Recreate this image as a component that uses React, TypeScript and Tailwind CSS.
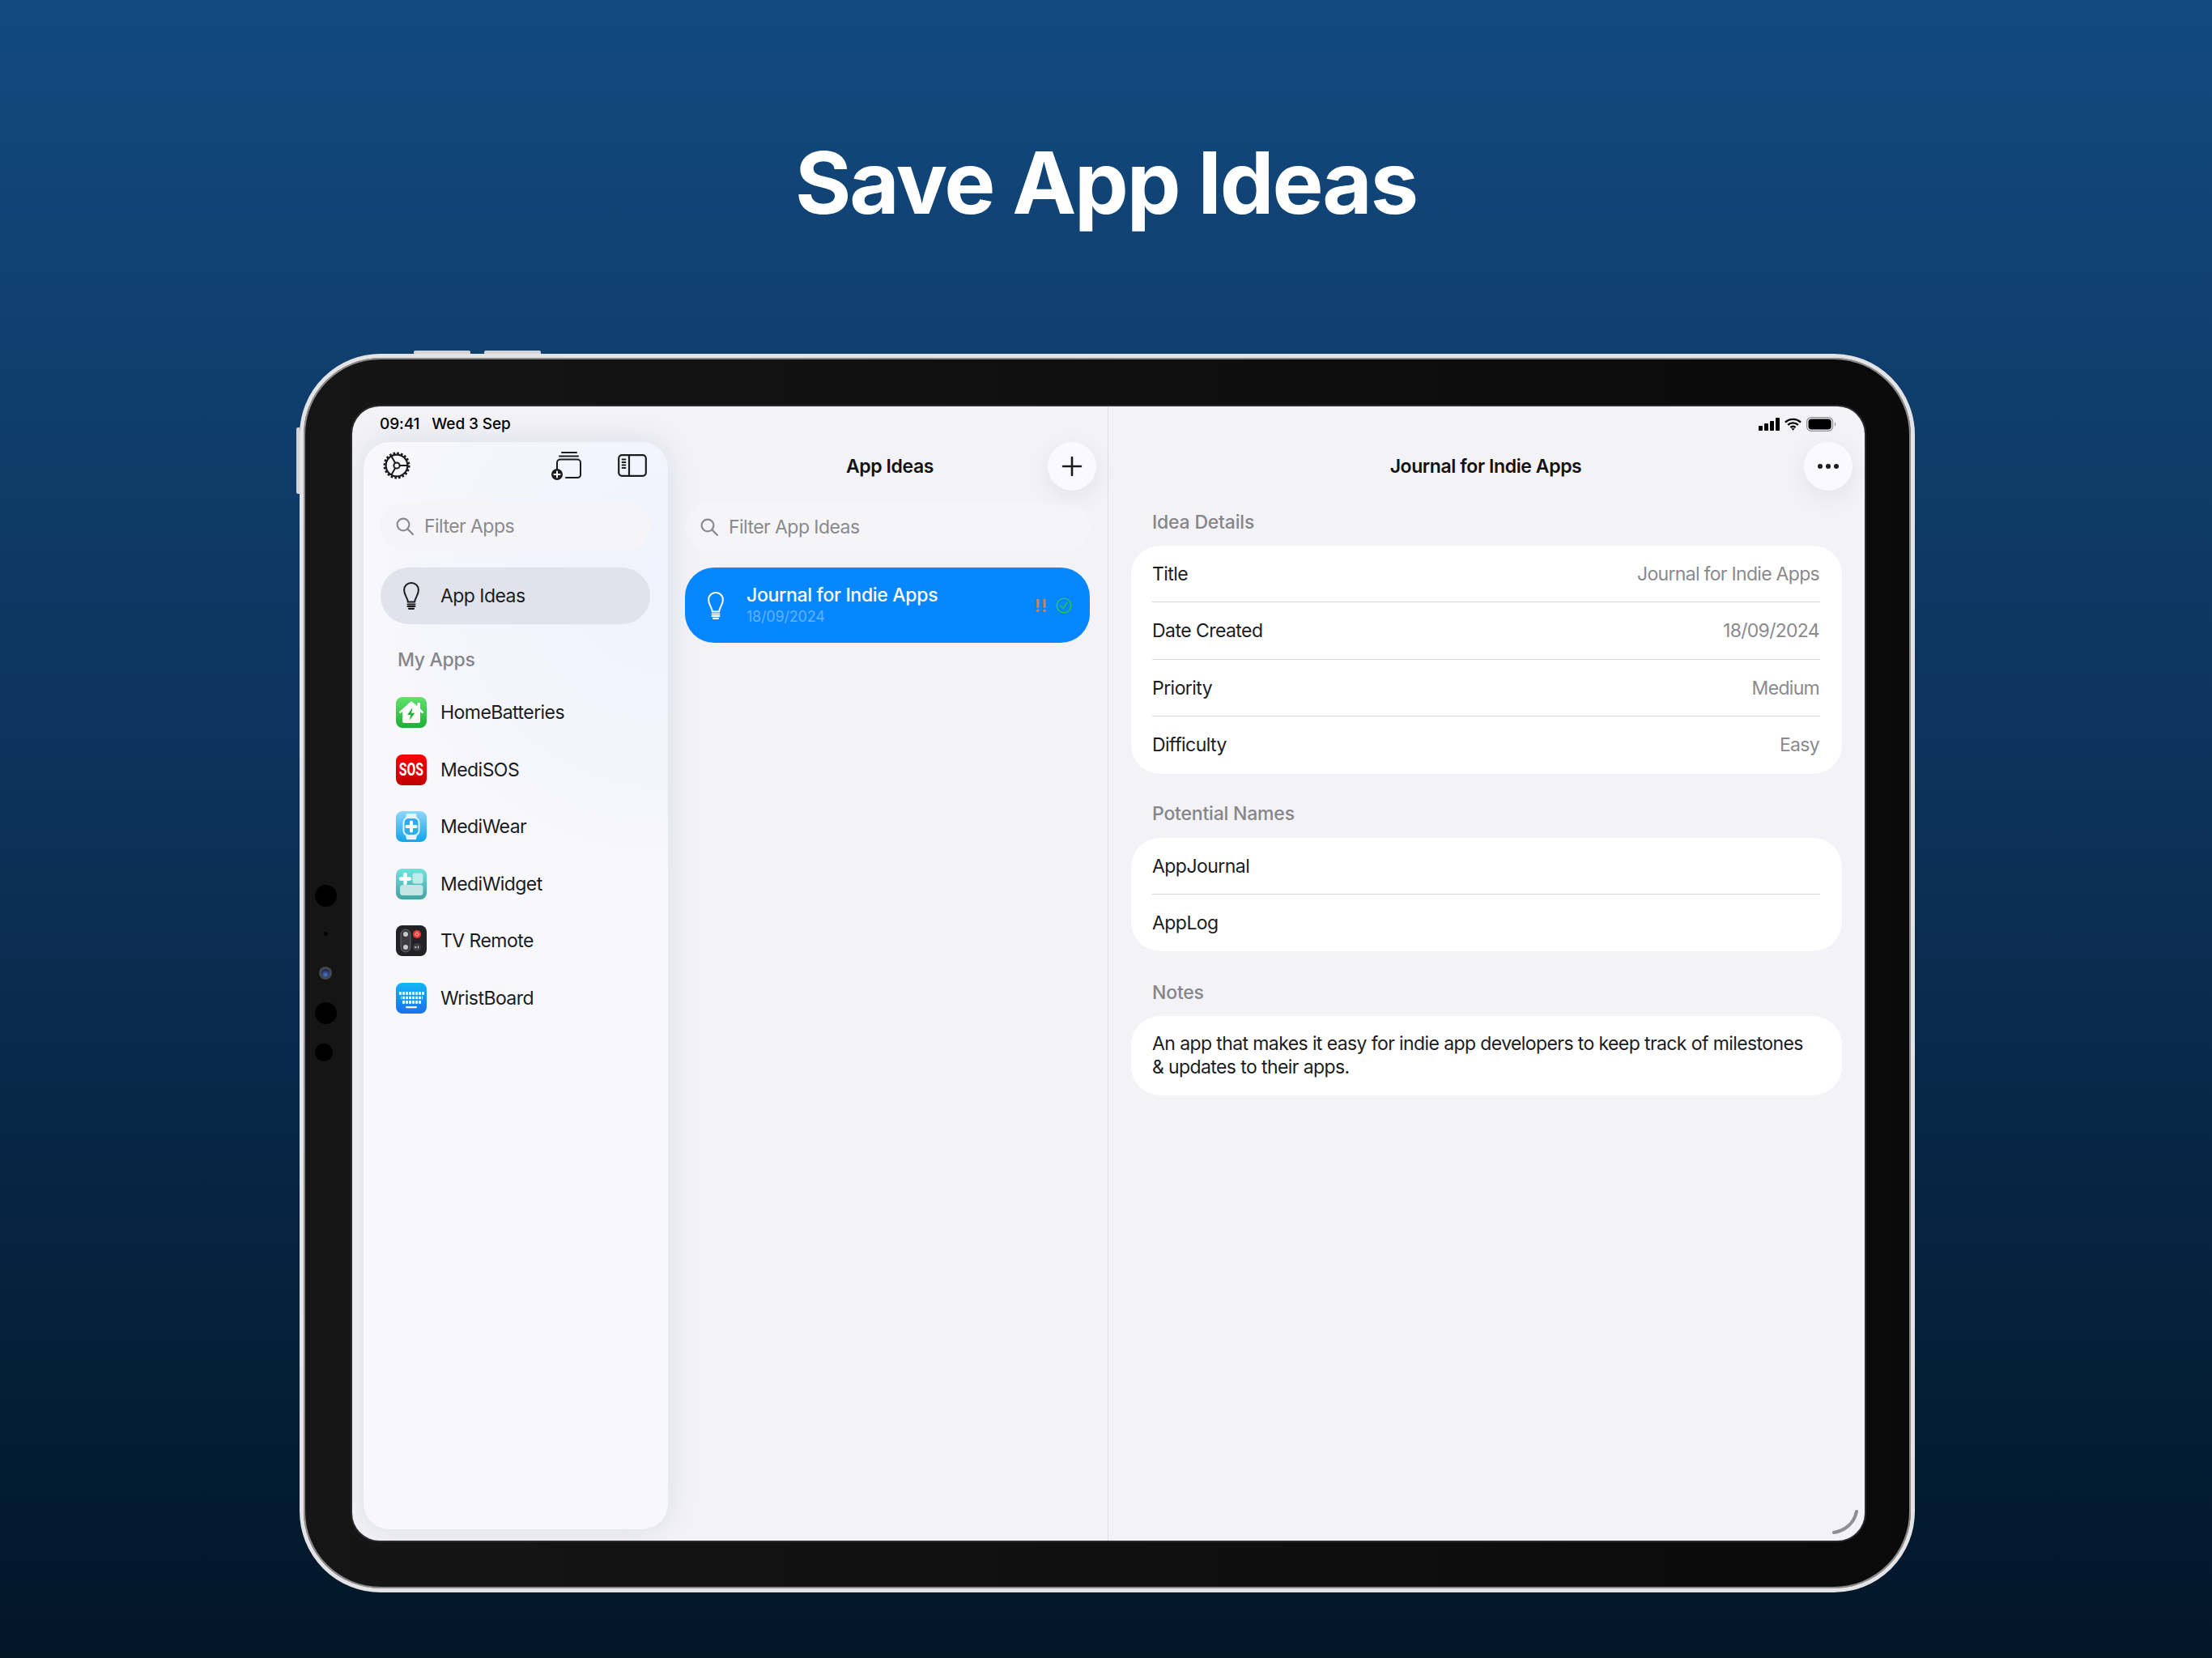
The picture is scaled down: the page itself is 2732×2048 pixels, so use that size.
// Save App Ideas - marketing screenshot with iPad frame
import React from 'react';

const FONT = "font-['Inter','Liberation_Sans',sans-serif]";

// ---------- toolbar + small glyphs ----------

const SearchIcon = () => (
  <svg width="24" height="24" viewBox="0 0 24 24" fill="none" stroke="#8a8a8e" strokeWidth="2.2" strokeLinecap="round">
    <circle cx="10" cy="10" r="7.4" />
    <path d="M15.6 15.6 22 22" />
  </svg>
);

const BulbIcon = ({ color }: { color: string }) => (
  <svg width="20" height="34" viewBox="0 0 20 34" fill="none" stroke={color} strokeWidth="2" strokeLinecap="round">
    <path d="M5.8 24.500C5.600 19.500 1.100 16 1.100 9.800 1.100 4.800 5 1.100 10 1.100s8.900 3.700 8.900 8.700c0 6.200-4.500 9.700-4.700 14.700Z" />
    <path d="M5.500 27.500h9M5.500 30h9" />
    <path d="M7 32.800h6" strokeWidth="2.200" />
  </svg>
);

const GearIcon = () => (
  <svg width="34" height="34" viewBox="0 0 34 34" fill="none" stroke="#1c1c1e">
    <circle cx="17" cy="17" r="13.4" strokeWidth="2.2" />
    <circle cx="17" cy="17" r="15" strokeWidth="3" strokeDasharray="2.6 2.1" />
    <circle cx="17" cy="17" r="3.6" strokeWidth="2" />
    <path d="M20.6 17H30M15.2 13.9 10.4 5.6M15.2 20.1l-4.800 8.300" strokeWidth="2" />
  </svg>
);

const StackAddIcon = () => (
  <svg width="38" height="36" viewBox="0 0 38 36" fill="none" stroke="#1c1c1e" strokeWidth="2" strokeLinecap="round">
    <path d="M14 2h18M11 6.500h23" />
    <path d="M8 22v-7.500a4 4 0 0 1 4-4h21a4 4 0 0 1 4 4v15a3.500 3.500 0 0 1-3.500 3.500H19" />
    <circle cx="8" cy="29" r="7" fill="#1c1c1e" stroke="none" />
    <path d="M8 25.400v7.200M4.400 29h7.200" stroke="#fff" />
  </svg>
);

const SidebarIcon = () => (
  <svg width="36" height="28" viewBox="0 0 36 28" fill="none" stroke="#1c1c1e" strokeWidth="2.2" strokeLinecap="round">
    <rect x="1.2" y="1.2" width="33.6" height="25.6" rx="4" />
    <path d="M14 1.500v25" />
    <path d="M5.500 6.500h4M5.500 10h4M5.500 13.500h4M5.500 17h4" strokeWidth="1.800" />
  </svg>
);

const StatusIcons = () => (
  <div className="flex items-center gap-[6px]">
    <svg width="26" height="16" viewBox="0 0 26 16" fill="#000">
      <rect x="0" y="10" width="5" height="6" rx="1" />
      <rect x="7" y="7" width="5" height="9" rx="1" />
      <rect x="14" y="4" width="5" height="12" rx="1" />
      <rect x="21" y="0" width="5" height="16" rx="1" />
    </svg>
    <svg width="21" height="16" viewBox="0 0 21 16" fill="none" stroke="#000" strokeWidth="2.4">
      <path d="M1 5.600c5.400-5 13.600-5 19 0M4.200 8.900c3.600-3.300 9-3.300 12.600 0M7.400 12c1.800-1.500 4.400-1.500 6.200 0" />
      <path d="M10.500 15.800 8.500 13.600c1.200-.8 2.800-.8 4 0Z" fill="#000" stroke="none" />
    </svg>
    <svg width="38" height="18" viewBox="0 0 38 18" fill="none">
      <rect x="0.6" y="0.6" width="32" height="16.800" rx="5.500" stroke="#8e8e93" strokeWidth="1.200" />
      <rect x="2.500" y="2.500" width="28.200" height="13" rx="3.800" fill="#000" />
      <path d="M35 6.500c1.500.4 1.500 4.600 0 5Z" fill="#8e8e93" />
    </svg>
  </div>
);

// ---------- app icons ----------

const HomeBatteriesIcon = () => (
  <svg width="38" height="38" viewBox="0 0 38 38">
    <defs>
      <linearGradient id="hb" x1="0" y1="0" x2="0" y2="1">
        <stop offset="0" stopColor="#5fe36c" />
        <stop offset="1" stopColor="#1fae35" />
      </linearGradient>
    </defs>
    <rect width="38" height="38" rx="8" fill="url(#hb)" />
    <path d="M19 5 3.800 18.600l1.500 1.800L8 18v11.500A2.500 2.500 0 0 0 10.500 32h17a2.500 2.500 0 0 0 2.500-2.500V18l2.700 2.400 1.500-1.800L30 14.300V7h-3.500v4.200Z" fill="#fff" />
    <path d="M20.500 13 14 22h4.200l-1.600 7 6.800-9.300h-4.200Z" fill="#28b53c" />
  </svg>
);

const SosIcon = () => (
  <div className="w-[38px] h-[38px] rounded-[8px] bg-gradient-to-b from-[#f80000] to-[#bf0000] flex items-center justify-center shrink-0">
    <span className="font-['Roboto',sans-serif] font-bold text-[22px] leading-none text-white scale-x-[0.72] tracking-[-0.2px]">SOS</span>
  </div>
);

const MediWearIcon = () => (
  <svg width="38" height="38" viewBox="0 0 38 38">
    <defs>
      <linearGradient id="mw" x1="0" y1="0" x2="0" y2="1">
        <stop offset="0" stopColor="#8dd6fb" />
        <stop offset="1" stopColor="#11a4ea" />
      </linearGradient>
    </defs>
    <rect width="38" height="38" rx="8" fill="url(#mw)" />
    <path d="M13 3h12l1 6H12ZM12 29h14l-1 6H13Z" fill="#e3f5fe" />
    <rect x="9.500" y="8" width="19" height="22" rx="6" fill="#2daeef" stroke="#e3f5fe" strokeWidth="2" />
    <path d="M19 13.500v11M13.500 19h11" stroke="#fff" strokeWidth="4" strokeLinecap="round" />
  </svg>
);

const MediWidgetIcon = () => (
  <svg width="38" height="38" viewBox="0 0 38 38">
    <defs>
      <linearGradient id="mg" x1="0" y1="0" x2="0" y2="1">
        <stop offset="0" stopColor="#6fe3de" />
        <stop offset="1" stopColor="#41a3a2" />
      </linearGradient>
    </defs>
    <rect width="38" height="38" rx="8" fill="url(#mg)" />
    <path d="M11.500 7v11M6 12.500h11" stroke="#fff" strokeWidth="4.400" strokeLinecap="round" />
    <rect x="20.500" y="5.500" width="13" height="13" rx="3" fill="#bfecea" />
    <rect x="5" y="20" width="28.500" height="13" rx="3.500" fill="#c3e6e4" />
  </svg>
);

const TvRemoteIcon = () => (
  <svg width="38" height="38" viewBox="0 0 38 38">
    <rect width="38" height="38" rx="8" fill="#222224" />
    <rect x="6" y="5" width="12" height="28" rx="6" fill="#3d3d40" stroke="#77777a" strokeWidth="0.800" />
    <circle cx="12" cy="11" r="3" fill="#c7c7cc" />
    <circle cx="12" cy="27" r="3" fill="#c7c7cc" />
    <circle cx="26" cy="11" r="5" fill="#ee3a35" />
    <circle cx="26" cy="11" r="2" fill="none" stroke="#fbd0ce" strokeWidth="0.800" />
    <circle cx="26" cy="27" r="5" fill="#3d3d40" />
    <path d="M23.500 25.500v3l2.500-1.500ZM27 25.500h1v3h-1Z" fill="#d1d1d6" />
  </svg>
);

const WristBoardIcon = () => (
  <svg width="38" height="38" viewBox="0 0 38 38">
    <defs>
      <linearGradient id="wb" x1="0" y1="0" x2="0" y2="1">
        <stop offset="0" stopColor="#14b5f7" />
        <stop offset="1" stopColor="#1a70ea" />
      </linearGradient>
      <pattern id="keys" width="4" height="5.500" patternUnits="userSpaceOnUse" x="4" y="11">
        <rect width="3" height="4" rx="0.600" fill="#fff" />
      </pattern>
    </defs>
    <rect width="38" height="38" rx="8" fill="url(#wb)" />
    <rect x="4" y="11" width="31" height="4" fill="url(#keys)" />
    <rect x="6" y="16.500" width="27" height="4" fill="url(#keys)" />
    <rect x="8" y="22" width="23" height="4" fill="url(#keys)" />
    <rect x="12" y="29" width="14" height="2.200" rx="1.100" fill="#fff" />
  </svg>
);

const apps = [
  { name: 'HomeBatteries', icon: HomeBatteriesIcon },
  { name: 'MediSOS', icon: SosIcon },
  { name: 'MediWear', icon: MediWearIcon },
  { name: 'MediWidget', icon: MediWidgetIcon },
  { name: 'TV Remote', icon: TvRemoteIcon },
  { name: 'WristBoard', icon: WristBoardIcon },
];

const ideaDetails = [
  { label: 'Title', value: 'Journal for Indie Apps' },
  { label: 'Date Created', value: '18/09/2024' },
  { label: 'Priority', value: 'Medium' },
  { label: 'Difficulty', value: 'Easy' },
];

// ---------- shared pieces ----------

const SearchField = ({ placeholder }: { placeholder: string }) => (
  <div className="h-[60px] rounded-full bg-[#f5f5f8] flex items-center gap-[12px] pl-[18px]">
    <SearchIcon />
    <span className="text-[23px] tracking-[-0.55px] text-[#8a8a8e]">{placeholder}</span>
  </div>
);

const RoundButton = ({ children }: { children: React.ReactNode }) => (
  <div className="w-[60px] h-[60px] rounded-full bg-[#fafafe] shadow-[0_8px_30px_rgba(0,0,0,0.07)] flex items-center justify-center">
    {children}
  </div>
);

const SectionLabel = ({ children }: { children: React.ReactNode }) => (
  <div className="h-[30px] pl-[26px] mb-[14px] flex items-center text-[23px] font-medium tracking-[-0.2px] text-[#85858a]">
    {children}
  </div>
);

const Row = ({ label, value, last }: { label: string; value?: string; last?: boolean }) => (
  <div className="h-[70.4px] ml-[26px] pr-[28px] flex items-center justify-between relative">
    <span className="text-[23px] tracking-[-0.55px] text-[#1c1c1e]">{label}</span>
    {value && <span className="text-[23px] tracking-[-0.7px] text-[#8a8a8e]">{value}</span>}
    {!last && <div className="absolute left-0 right-[27px] bottom-0 h-px bg-[#d8d8dc]" />}
  </div>
);

// ---------- columns ----------

const Sidebar = () => (
  <div className="w-[390px] shrink-0 pt-[44px] pb-[14px] pl-[14px] relative z-10">
    <div className="h-full rounded-[32px] bg-[#f7f7fc] bg-[radial-gradient(circle_at_100%_12%,#eef3fd_0%,#f7f7fc_30%)] shadow-[0_0_36px_rgba(110,120,160,0.16)] pl-[21px] pr-[22px]">
      <div className="h-[58px] flex items-center justify-between pl-[3px] pr-[4px]">
        <GearIcon />
        <div className="flex items-center gap-[45px]">
          <StackAddIcon />
          <SidebarIcon />
        </div>
      </div>
      <div className="mt-[16px]">
        <SearchField placeholder="Filter Apps" />
      </div>
      <div className="mt-[21px] h-[70px] rounded-full bg-[#e0e3ec] flex items-center pl-[28px] gap-[26px]">
        <BulbIcon color="#1c1c1e" />
        <span className="text-[23px] tracking-[-0.55px] text-[#1c1c1e]">App Ideas</span>
      </div>
      <div className="mt-[29px] pl-[21px] text-[23px] font-medium tracking-[-0.3px] text-[#85858a] leading-[30px]">My Apps</div>
      <div className="mt-[15px]">
        {apps.map((app) => {
          const Icon = app.icon;
          return (
            <div key={app.name} className="h-[70.5px] flex items-center gap-[17px] pl-[19px]">
              <Icon />
              <span className="text-[23px] tracking-[-0.55px] text-[#1c1c1e]">{app.name}</span>
            </div>
          );
        })}
      </div>
    </div>
  </div>
);

const IdeasList = () => (
  <div className="w-[544px] shrink-0 pt-[44px] border-r border-[#dfdfe3]">
    <div className="grid grid-cols-[60px_1fr_60px] items-center px-[14px]">
      <div />
      <div className="pl-[5px] text-center text-[23px] font-semibold tracking-[-0.4px] text-[#111]">App Ideas</div>
      <RoundButton>
        <svg width="26" height="26" viewBox="0 0 26 26" stroke="#1c1c1e" strokeWidth="2.600" strokeLinecap="round">
          <path d="M13 2v22M2 13h22" />
        </svg>
      </RoundButton>
    </div>
    <div className="pl-[21px] pr-[22px] mt-[15px]">
      <SearchField placeholder="Filter App Ideas" />
      <div className="mt-[20px] h-[93px] rounded-[36px] bg-[#0787ff] flex items-center pl-[28px] pr-[22px]">
        <BulbIcon color="#fff" />
        <div className="ml-[28px] flex-1 pb-[1px]">
          <div className="text-[23px] font-medium tracking-[-0.3px] leading-[30px] text-white">Journal for Indie Apps</div>
          <div className="text-[18px] tracking-[-0.2px] leading-[24px] text-[#62b2ff]">18/09/2024</div>
        </div>
        <span className="text-[22px] font-semibold tracking-[1px] text-[#c98545] leading-none">!!</span>
        <svg className="ml-[10px]" width="20" height="20" viewBox="0 0 20 20" fill="none" stroke="#27c15b" strokeWidth="1.600">
          <circle cx="10" cy="10" r="8.800" />
          <path d="M6 10.500 9 13.500 14 6.500" strokeLinecap="round" strokeLinejoin="round" />
        </svg>
      </div>
    </div>
  </div>
);

const IdeaDetail = () => (
  <div className="flex-1 pt-[44px] relative">
    <div className="grid grid-cols-[60px_1fr_60px] items-center px-[15px]">
      <div />
      <div className="pr-[2px] text-center text-[23px] font-semibold tracking-[-0.4px] text-[#111]">Journal for Indie Apps</div>
      <RoundButton>
        <svg width="28" height="8" viewBox="0 0 28 8" fill="#1c1c1e">
          <circle cx="4" cy="4" r="3" />
          <circle cx="14" cy="4" r="3" />
          <circle cx="24" cy="4" r="3" />
        </svg>
      </RoundButton>
    </div>

    <div className="px-[28px] mt-[24px]">
      <SectionLabel>Idea Details</SectionLabel>
      <div className="rounded-[36px] bg-white">
        {ideaDetails.map((row, i) => (
          <Row key={row.label} label={row.label} value={row.value} last={i === ideaDetails.length - 1} />
        ))}
      </div>

      <div className="mt-[35px]">
        <SectionLabel>Potential Names</SectionLabel>
      </div>
      <div className="rounded-[36px] bg-white">
        <Row label="AppJournal" />
        <Row label="AppLog" last />
      </div>

      <div className="mt-[36px]">
        <SectionLabel>Notes</SectionLabel>
      </div>
      <div className="rounded-[36px] bg-white h-[98px] pl-[26px] pr-[40px] flex items-center text-[23px] tracking-[-0.6px] leading-[29px] text-[#1c1c1e]">
        An app that makes it easy for indie app developers to keep track of milestones &amp; updates to their apps.
      </div>
    </div>
  </div>
);

// ---------- page ----------

export default function App() {
  return (
    <div className={`${FONT} w-[2732px] h-[2048px] overflow-hidden bg-gradient-to-b from-[#124a7f] via-[#0c3158] via-50% to-[#021628] flex flex-col items-center pt-[174px]`}>
      <h1 className="text-[106px] leading-[104px] font-bold tracking-[-2.2px] text-white">Save App Ideas</h1>

      {/* iPad frame */}
      <div className="relative ml-[3px] mt-[159px] w-[1995px] h-[1530px] rounded-[100px] border-[5px] border-[#e4e4e6] bg-gradient-to-r from-[#151515] to-[#0a0a0a] shadow-[inset_0_0_0_2px_#8a8a8c] pt-[60px] pl-[60px] pr-[57px] pb-[59px]">
        {/* hardware buttons */}
        <div className="absolute top-[-9px] left-[136px] w-[70px] h-[4px] rounded-t-[2px] bg-[#d4d4d6]" />
        <div className="absolute top-[-9px] left-[223px] w-[70px] h-[4px] rounded-t-[2px] bg-[#d4d4d6]" />
        <div className="absolute left-[-9px] top-[86px] w-[4px] h-[82px] rounded-l-[2px] bg-[#d4d4d6]" />

        {/* camera array */}
        <div className="absolute left-[14px] top-[651px] w-[27px] h-[27px] rounded-full bg-black" />
        <div className="absolute left-[25px] top-[709px] w-[5px] h-[5px] rounded-full bg-black" />
        <div className="absolute left-[19px] top-[752px] w-[16px] h-[16px] rounded-full bg-[#46484f] flex items-center justify-center">
          <div className="w-[10px] h-[10px] rounded-full bg-[radial-gradient(circle_at_50%_70%,#4f73c9_0%,#1b2a55_70%)]" />
        </div>
        <div className="absolute left-[14px] top-[796px] w-[27px] h-[27px] rounded-full bg-black" />
        <div className="absolute left-[14px] top-[847px] w-[22px] h-[22px] rounded-full bg-black" />

        {/* screen */}
        <div className="relative h-full rounded-[34px] overflow-hidden bg-[#f2f2f7] flex ring-2 ring-[#2a2a2e]">
          <div className="absolute top-0 inset-x-0 h-[44px] px-[34px] flex items-center justify-between z-20">
            <div className="flex gap-[15px] text-[19px] font-medium tracking-[-0.1px] text-black">
              <span>09:41</span>
              <span>Wed 3 Sep</span>
            </div>
            <div>
              <StatusIcons />
            </div>
          </div>

          <Sidebar />
          <IdeasList />
          <IdeaDetail />

          {/* resize handle */}
          <svg className="absolute right-[8px] bottom-[8px]" width="32" height="30" viewBox="0 0 32 30" fill="none" stroke="#8e8e93" strokeWidth="4" strokeLinecap="round">
            <path d="M2 28C15 26 27 17 30 2" />
          </svg>
        </div>
      </div>
    </div>
  );
}
